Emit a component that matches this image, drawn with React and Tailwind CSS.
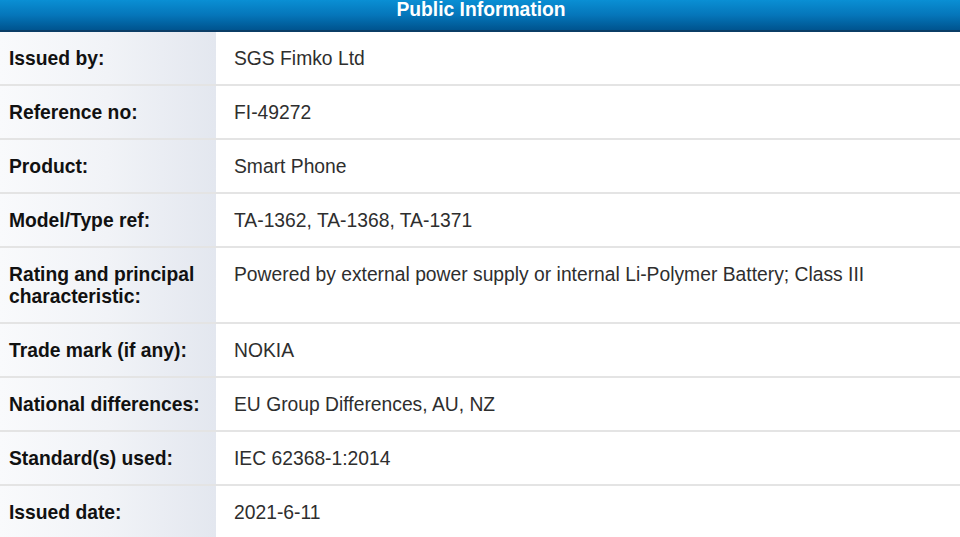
const rows = [
  { label: "Issued by:", value: "SGS Fimko Ltd" },
  { label: "Reference no:", value: "FI-49272" },
  { label: "Product:", value: "Smart Phone" },
  { label: "Model/Type ref:", value: "TA-1362, TA-1368, TA-1371" },
  {
    label: "Rating and principal characteristic:",
    value: "Powered by external power supply or internal Li-Polymer Battery; Class III",
    tall: true,
  },
  { label: "Trade mark (if any):", value: "NOKIA" },
  { label: "National differences:", value: "EU Group Differences, AU, NZ" },
  { label: "Standard(s) used:", value: "IEC 62368-1:2014" },
  { label: "Issued date:", value: "2021-6-11" },
];

function InfoRow({ label, value, tall }) {
  return (
    <div
      className={`flex border-b-2 border-[#e4e4e4] ${
        tall ? "h-[76px] items-start" : "h-[54px] items-center"
      }`}
    >
      <div
        className={`w-[216px] shrink-0 self-stretch flex px-[9px] bg-gradient-to-r from-[#f9fafc] via-[#f1f3f7] to-[#e3e7ef] ${
          tall ? "items-start pt-[16px]" : "items-center pt-[2px]"
        }`}
      >
        <span className="font-bold text-[#111] leading-[22px]">{label}</span>
      </div>
      <div className={`pl-[18px] text-[#2e2e2e] leading-[22px] ${tall ? "pt-[16px]" : "pt-[2px]"}`}>
        {value}
      </div>
    </div>
  );
}

export default function App() {
  return (
    <div
      className="w-[960px] h-[537px] overflow-hidden bg-white text-[19.3px]"
      style={{ fontFamily: "'Liberation Sans', Arial, sans-serif" }}
    >
      {/* Header bar */}
      <div className="h-[32px] bg-gradient-to-b from-[#0a8fd4] via-[#0576ba] to-[#00548f] border-b-2 border-[#0b3d66] flex justify-center">
        <span className="text-white font-bold leading-[20px] text-[19.3px] pl-[2px]">Public Information</span>
      </div>

      <div className="flex flex-col">
        {rows.map((r) => (
          <InfoRow key={r.label} {...r} />
        ))}
      </div>
    </div>
  );
}
